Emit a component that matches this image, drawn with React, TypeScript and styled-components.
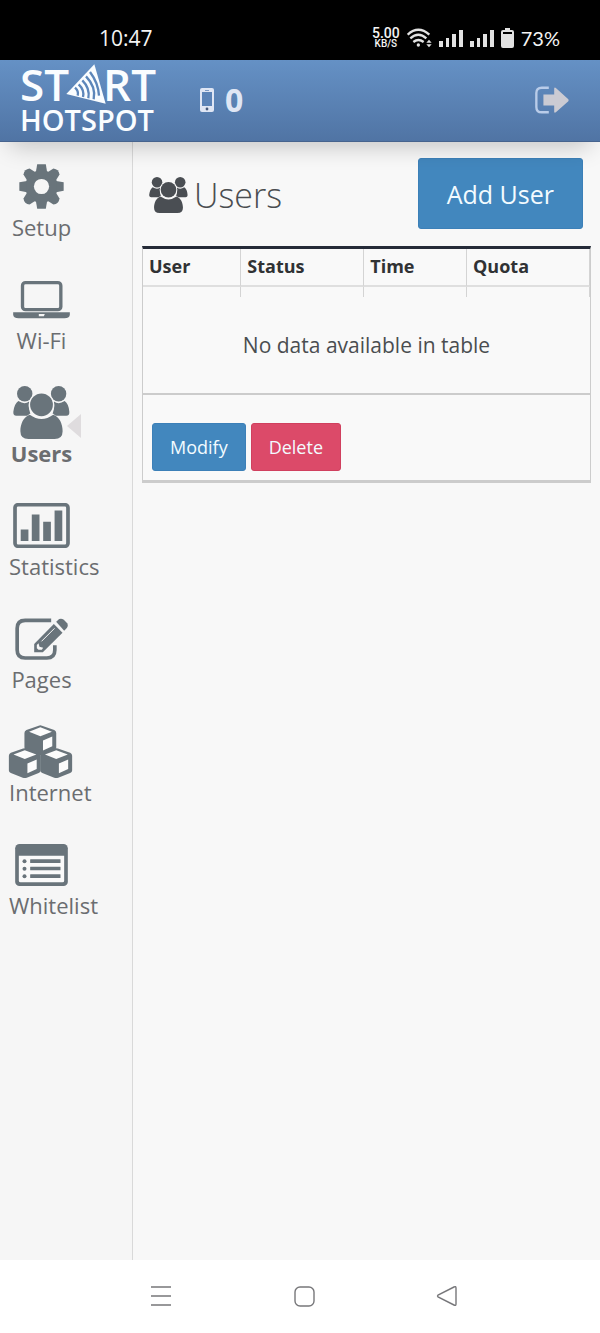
import React from "react";
import styled, { createGlobalStyle, css } from "styled-components";

const GlobalStyle = createGlobalStyle`
  *, *::before, *::after { box-sizing: border-box; }
  body {
    margin: 0;
    background: #f8f8f8;
    color: #4a4d50;
    font-family: "Open Sans", "Noto Sans", sans-serif;
  }
  button { font-family: inherit; cursor: pointer; }
`;

const Page = styled.div`
  min-height: 100vh;
  display: flex;
  flex-direction: column;
`;

/* ---------- phone status bar ---------- */

const StatusBar = styled.div`
  position: relative;
  z-index: 3;
  height: 60px;
  padding: 16px 40px 0 99px;
  background: #000;
  color: #f4f4f4;
  display: flex;
  align-items: center;
  justify-content: space-between;
`;

const Clock = styled.time`
  font-size: 21px;
  line-height: 28px;
  font-weight: 500;
`;

const StatusIcons = styled.div`
  display: flex;
  align-items: center;
  gap: 7px;
  svg { display: block; fill: #e2e2e2; }
`;

const Speed = styled.div`
  font: 500 14px/11px Roboto, sans-serif;
  text-align: center;
  small { display: block; font-size: 10px; line-height: 10px; }
`;

const Battery = styled.span`
  font: 400 20px/28px Lato, sans-serif;
`;

/* ---------- application header ---------- */

const Header = styled.header`
  position: relative;
  z-index: 2;
  height: 82px;
  padding: 0 31px 2px 20px;
  display: flex;
  align-items: center;
  background: linear-gradient(#6591c5, #5074a4);
  border-bottom: 1px solid #47648e;
  box-shadow: 0 14px 24px -10px rgba(0, 0, 0, 0.22);
`;

const Logo = styled.a`
  width: 136px;
  color: #fafdff;
  font-weight: 600;
  text-decoration: none;
  white-space: nowrap;
`;

const LogoTop = styled.span`
  display: flex;
  align-items: center;
  justify-content: space-between;
  font-size: 44px;
  line-height: 40px;
  svg { display: block; margin: 0 -8px; }
`;

const LogoBottom = styled.span`
  display: block;
  font-size: 29px;
  line-height: 32px;
`;

const Clients = styled.div`
  margin-left: 44px;
  display: flex;
  align-items: center;
  gap: 11px;
  color: #dfe6f4;
  font-size: 32px;
  line-height: 40px;
  font-weight: 700;
`;

const LogoutButton = styled.button`
  margin-left: auto;
  padding: 0;
  border: 0;
  background: none;
  svg { display: block; }
`;

/* ---------- side menu ---------- */

const Body = styled.div`
  flex: 1;
  display: flex;
`;

const Sidebar = styled.nav`
  flex: 0 0 133px;
  padding: 18px 0 0 9px;
  background: #f6f6f6;
  border-right: 1px solid #d9d9d9;
`;

const MenuLink = styled.a<{ $active?: boolean }>`
  position: relative;
  display: block;
  width: 65px;
  height: 113px;
  color: #6b6d70;
  font-size: 22px;
  line-height: 28px;
  text-align: center;
  text-decoration: none;
  white-space: nowrap;
  ${(p) =>
    p.$active &&
    css`
      font-weight: 700;
      &::after {
        content: "";
        position: absolute;
        top: 28px;
        right: -7px;
        border: solid transparent;
        border-width: 12px 14px 12px 0;
        border-right-color: #dfdcde;
      }
    `}
`;

const MenuIcon = styled.span`
  height: 53px;
  display: flex;
  align-items: center;
  justify-content: center;
  color: #69747b;
  svg { display: block; flex: none; }
`;

/* ---------- content ---------- */

const Main = styled.main`
  flex: 1;
  min-width: 0;
  padding: 16px 9px 24px;
`;

const TitleRow = styled.div`
  display: flex;
  align-items: center;
  justify-content: space-between;
  padding: 0 8px 0 7px;
  margin-bottom: 17px;
`;

const Title = styled.h1`
  margin: 0;
  padding-top: 3px;
  display: flex;
  align-items: center;
  gap: 6px;
  font-size: 34px;
  line-height: 48px;
  font-weight: 300;
  svg { display: block; color: #4a4e53; }
`;

const Button = styled.button<{ $tone?: "danger"; $large?: boolean }>`
  height: ${(p) => (p.$large ? 71 : 48)}px;
  padding: 0 ${(p) => (p.$large ? 28 : 17)}px;
  border: 1px solid ${(p) => (p.$tone ? "#d0405e" : "#3c80b8")};
  border-radius: 3px;
  background: ${(p) => (p.$tone ? "#dc4a69" : "#4287be")};
  color: #f3fbff;
  font-size: ${(p) => (p.$large ? 25 : 18)}px;
  line-height: 24px;
`;

const Panel = styled.section`
  border: 1px solid #ccc;
  border-top: 3px solid #252b38;
  border-bottom: 3px solid #ccc;
  background: #f9f9f9;
`;

const Table = styled.table`
  width: 100%;
  table-layout: fixed;
  border-collapse: separate;
  border-spacing: 0;
`;

const HeadCell = styled.th`
  height: 38px;
  padding: 0 0 3px 6px;
  border-right: 1px solid #d4d4d4;
  border-bottom: 2px solid #dfdfdf;
  color: #303234;
  font-size: 18px;
  line-height: 24px;
  font-weight: 700;
  text-align: left;
`;

const SpacerCell = styled.td`
  height: 10px;
  padding: 0;
  border-right: 1px solid #d4d4d4;
`;

const EmptyCell = styled.td`
  height: 98px;
  padding: 0;
  border-bottom: 2px solid #ccc;
  font-size: 21px;
  line-height: 28px;
  text-align: center;
`;

const Actions = styled.div`
  display: flex;
  gap: 5px;
  padding: 28px 9px 9px;
`;

/* ---------- phone navigation bar ---------- */

const PhoneNav = styled.nav`
  height: 73px;
  padding: 0 0 1px 8px;
  background: #fff;
  display: flex;
  align-items: center;
  justify-content: center;
  gap: 121px;
`;

const PhoneButton = styled.button`
  padding: 0;
  border: 0;
  background: none;
  svg { display: block; fill: none; stroke: #77777a; stroke-width: 1.4; }
`;

/* ---------- icons ---------- */

const GearIcon = () => (
  <svg width="45" height="45" viewBox="-68 -68 136 136" fill="currentColor">
    <mask id="gear-hole">
      <rect x="-68" y="-68" width="136" height="136" fill="#fff" />
      <circle r="23" fill="#000" />
    </mask>
    <g mask="url(#gear-hole)">
      <circle r="49" />
      {[0, 90, 180, 270].map((a) => (
        <path key={a} transform={`rotate(${a})`} d="M-17-44L-13-67H13L17-44Z" />
      ))}
      {[45, 135, 225, 315].map((a) => (
        <path key={a} transform={`rotate(${a})`} d="M-18-42L-13-64Q0-74 13-64L18-42Z" />
      ))}
    </g>
  </svg>
);

const LaptopIcon = () => (
  <svg width="57" height="38" viewBox="40 392 170 114">
    <rect x="68" y="397" width="115" height="81" rx="9" fill="none" stroke="currentColor" strokeWidth="10" />
    <path d="M40 486H210V494Q208 504 194 504H56Q42 504 40 494Z" fill="currentColor" />
    <path d="M117 491H135L132 498H117Z" fill="#f6f6f6" />
  </svg>
);

const UsersIcon = ({ width, height }: { width: number; height: number }) => (
  <svg width={width} height={height} viewBox="40 49 170 158" fill="currentColor">
    <circle cx="75" cy="72" r="23" />
    <circle cx="176" cy="72" r="23" />
    <path d="M56 94Q75 106 88 95Q84 120 96 138H50Q40 138 41 126Q44 102 56 94Z" />
    <path d="M194 94Q176 106 162 95Q166 120 154 138H199Q209 138 208 126Q206 102 194 94Z" />
    <circle cx="125" cy="105" r="38" fill="#f7f7f7" />
    <path d="M92 130Q125 158 158 130Q189 150 189 188Q189 210 164 210H86Q60 210 60 188Q60 150 92 130Z" fill="#f7f7f7" />
    <circle cx="125" cy="105" r="34" />
    <path d="M90 135Q125 160 160 135C179 141 188 163 188 184Q188 207 164 207H86Q62 207 62 184C62 163 71 141 90 135Z" />
  </svg>
);

const StatisticsIcon = () => (
  <svg width="57" height="45" viewBox="40 401 170 134" fill="currentColor">
    <rect x="46" y="406" width="158" height="124" rx="9" fill="none" stroke="currentColor" strokeWidth="11" />
    <path d="M63 480H86V514H63ZM96 435H119V514H96ZM130 457H153V514H130ZM164 423H187V514H164Z" />
  </svg>
);

const PagesIcon = () => (
  <svg width="53" height="42" viewBox="46 49 158 126" fill="currentColor">
    <path d="M154 56H76Q52 56 52 80V145Q52 169 76 169H141Q165 169 165 145V131" fill="none" stroke="currentColor" strokeWidth="11" />
    <path d="M103 127L162 67L188 93L129 152H103Z" />
    <path d="M169 60L178 52Q185 49 192 54L202 65Q206 72 201 79L193 87Z" />
    <path d="M111 130L116 125L119 135L130 138L126 144H116L111 140Z" fill="#f6f6f6" />
    <path d="M125 119L164 80" stroke="#f6f6f6" strokeWidth="3" />
  </svg>
);

const CubesIcon = () => (
  <svg width="67" height="53" viewBox="23 17 201 160">
    {[
      [120, 18],
      [73, 87],
      [168, 87],
    ].map(([x, y]) => (
      <g key={x} transform={`translate(${x} ${y})`}>
        <path
          d="M-5 1Q0-1 5 1L42 14Q48 17 48 23V67Q48 72 42 75L6 89Q0 91-6 89L-42 75Q-48 72-48 67V23Q-48 17-42 14Z"
          fill="currentColor"
        />
        <path d="M-34 19L0 6L35 19L0 33ZM8 46L36 34V63L8 76Z" fill="#fcfcfc" />
      </g>
    ))}
  </svg>
);

const ListIcon = () => (
  <svg width="53" height="42" viewBox="46 69 158 126">
    <rect x="46" y="69" width="158" height="126" rx="13" fill="currentColor" />
    <path d="M57 104H193V179Q193 184 188 184H62Q57 184 57 179Z" fill="#fafafa" />
    <g fill="currentColor">
      {[121, 143, 166].map((y) => (
        <g key={y}>
          <circle cx="74" cy={y} r="6" />
          <rect x="91" y={y - 6} width="91" height="11" rx="1" />
        </g>
      ))}
    </g>
  </svg>
);

const LogoMark = () => (
  <svg width="40" height="40" viewBox="190 193 120 120">
    <path d="M275 194L309 312L191 283Z" fill="#fafdff" />
    <g fill="none" stroke="#5c86ba" strokeWidth="7">
      <path d="M217 264Q229 275 225 288" />
      <path d="M228 254Q246 271 241 292" />
      <path d="M239 242Q263 266 257 296" />
      <path d="M250 230Q281 262 273 299" />
      <path d="M262 217Q287 250 289 288" />
    </g>
  </svg>
);

const PhoneIcon = () => (
  <svg width="14" height="24" viewBox="0 0 14 24">
    <rect width="14" height="24" rx="2" fill="#dfe6f4" />
    <rect x="2" y="4" width="10" height="14" fill="#5b83b7" />
    <rect x="5" y="2" width="4" height="1" fill="#7c9ac4" />
    <circle cx="7" cy="21" r="1.4" fill="#46597c" />
  </svg>
);

const LogoutIcon = () => (
  <svg width="34" height="28" viewBox="707 258 101 83">
    <path d="M748 263H727Q711 263 711 279V320Q711 336 727 336H748" fill="none" stroke="#b9cce9" strokeWidth="7" />
    <path d="M732 283H764V265Q765 261 769 264L806 297Q808 300 806 303L769 336Q765 339 764 335V316H732Z" fill="#cbcbd3" />
  </svg>
);

const WifiIcon = () => (
  <svg width="25" height="20" viewBox="318 82 75 58">
    <g style={{ fill: "none" }} stroke="#e2e2e2" strokeWidth="7">
      <path d="M320 101Q352 72 385 101" />
      <path d="M328 112Q352 91 376 112" />
      <path d="M337 123Q352 111 368 123" />
    </g>
    <circle cx="352" cy="132" r="5" />
    <path d="M376 125L384 116L392 125ZM376 130H392L384 139Z" />
  </svg>
);

const SignalIcon = () => (
  <svg width="24" height="18" viewBox="0 0 24 18">
    <path d="M0 12H4V18H0ZM7 9H10V18H7ZM13 5H17V18H13ZM20 1H24V18H20Z" />
  </svg>
);

const BatteryIcon = () => (
  <svg width="13" height="20" viewBox="0 0 13 20">
    <path fillRule="evenodd" d="M4 0H9V2H11Q13 2 13 4V18Q13 20 11 20H2Q0 20 0 18V4Q0 2 2 2H4ZM2 4V6H11V4Z" />
  </svg>
);

const menu = [
  { label: "Setup", icon: <GearIcon /> },
  { label: "Wi-Fi", icon: <LaptopIcon /> },
  { label: "Users", icon: <UsersIcon width={57} height={53} />, active: true },
  { label: "Statistics", icon: <StatisticsIcon /> },
  { label: "Pages", icon: <PagesIcon /> },
  { label: "Internet", icon: <CubesIcon /> },
  { label: "Whitelist", icon: <ListIcon /> },
];

const columns = [
  { label: "User", width: "22%" },
  { label: "Status", width: "27.5%" },
  { label: "Time", width: "23%" },
  { label: "Quota", width: "27.5%" },
];

export default function App() {
  return (
    <Page>
      <GlobalStyle />
      <StatusBar>
        <Clock>10:47</Clock>
        <StatusIcons>
          <Speed>
            5.00<small>KB/S</small>
          </Speed>
          <WifiIcon />
          <SignalIcon />
          <SignalIcon />
          <BatteryIcon />
          <Battery>73%</Battery>
        </StatusIcons>
      </StatusBar>

      <Header>
        <Logo href="#home">
          <LogoTop>
            <span>ST</span>
            <LogoMark />
            <span>RT</span>
          </LogoTop>
          <LogoBottom>HOTSPOT</LogoBottom>
        </Logo>
        <Clients>
          <PhoneIcon />
          <span>0</span>
        </Clients>
        <LogoutButton type="button" aria-label="Log out">
          <LogoutIcon />
        </LogoutButton>
      </Header>

      <Body>
        <Sidebar>
          {menu.map((m) => (
            <MenuLink key={m.label} href={`#${m.label.toLowerCase()}`} $active={m.active}>
              <MenuIcon>{m.icon}</MenuIcon>
              {m.label}
            </MenuLink>
          ))}
        </Sidebar>

        <Main>
          <TitleRow>
            <Title>
              <UsersIcon width={39} height={38} />
              Users
            </Title>
            <Button type="button" $large>
              Add User
            </Button>
          </TitleRow>

          <Panel>
            <Table>
              <colgroup>
                {columns.map((c) => (
                  <col key={c.label} width={c.width} />
                ))}
              </colgroup>
              <thead>
                <tr>
                  {columns.map((c) => (
                    <HeadCell key={c.label} scope="col">
                      {c.label}
                    </HeadCell>
                  ))}
                </tr>
              </thead>
              <tbody>
                <tr>
                  {columns.map((c) => (
                    <SpacerCell key={c.label} />
                  ))}
                </tr>
                <tr>
                  <EmptyCell colSpan={4}>No data available in table</EmptyCell>
                </tr>
              </tbody>
            </Table>
            <Actions>
              <Button type="button">Modify</Button>
              <Button type="button" $tone="danger">
                Delete
              </Button>
            </Actions>
          </Panel>
        </Main>
      </Body>

      <PhoneNav>
        <PhoneButton type="button" aria-label="Recent apps">
          <svg width="22" height="22" viewBox="0 0 22 22">
            <path d="M1 2H21M1 11H21M1 20H21" />
          </svg>
        </PhoneButton>
        <PhoneButton type="button" aria-label="Home">
          <svg width="22" height="22" viewBox="0 0 22 22">
            <rect x="2" y="2" width="19" height="19" rx="5" />
          </svg>
        </PhoneButton>
        <PhoneButton type="button" aria-label="Back">
          <svg width="22" height="22" viewBox="0 0 22 22">
            <path d="M2 10Q1 11 2 12L18 20Q20 21 20 19V3Q20 1 18 2Z" />
          </svg>
        </PhoneButton>
      </PhoneNav>
    </Page>
  );
}
